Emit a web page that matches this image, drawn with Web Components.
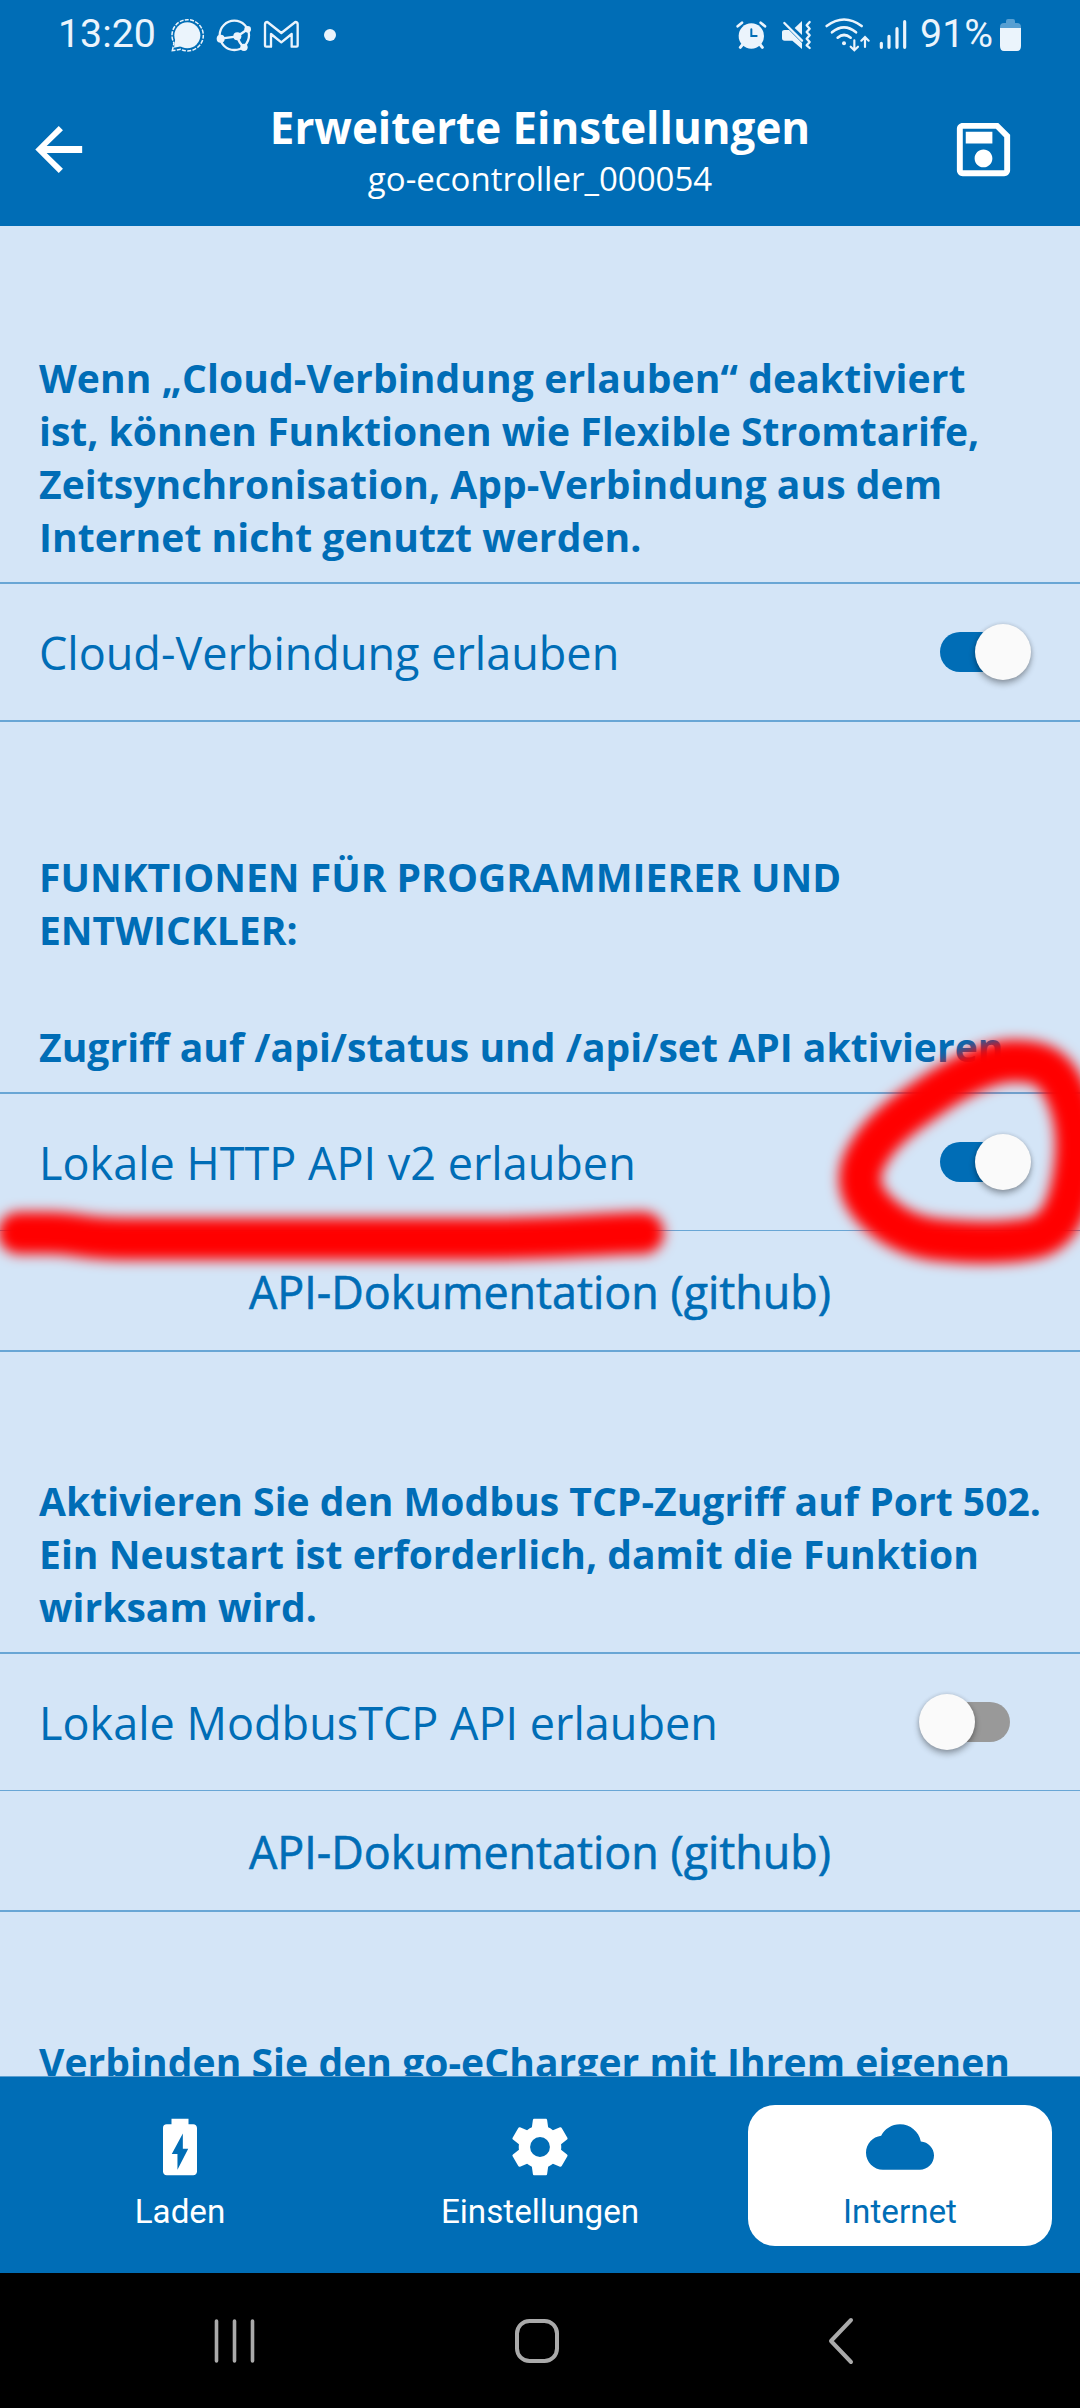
<!DOCTYPE html>
<html lang="de">
<head>
<meta charset="utf-8">
<title>Erweiterte Einstellungen</title>
<style>
html, body { margin: 0; padding: 0; }
body { width: 1080px; height: 2408px; overflow: hidden; font-family: "Open Sans", "Noto Sans", sans-serif; --blue: #006db6; --pale: #d4e5f7; --line: #69a6d5; }
</style>
</head>
<body>
<app-screen>
  <status-bar slot="top"></status-bar>
  <app-bar slot="top"><span slot="title">Erweiterte Einstellungen</span><span slot="subtitle">go-econtroller_000054</span></app-bar>

  <section-note style="--top:125px"><span style="letter-spacing:.1px">Wenn „Cloud-Verbindung erlauben“ deaktiviert</span><br><span style="letter-spacing:0">ist, können Funktionen wie Flexible Stromtarife,</span><br><span style="letter-spacing:.06px">Zeitsynchronisation, App-Verbindung aus dem</span><br><span style="letter-spacing:.05px">Internet nicht genutzt werden.</span></section-note>
  <toggle-row on>Cloud-Verbindung erlauben</toggle-row>

  <section-note style="--top:128px"><span style="letter-spacing:0">FUNKTIONEN FÜR PROGRAMMIERER UND<br>ENTWICKLER:</span><p style="margin:64px 0 0;letter-spacing:.04px">Zugriff auf /api/status und /api/set API aktivieren</p></section-note>
  <toggle-row on thin>Lokale HTTP API v2 erlauben</toggle-row>
  <link-row>API-Dokumentation (github)</link-row>

  <section-note style="--top:122px">Aktivieren Sie den Modbus TCP-Zugriff auf Port 502.<br>Ein Neustart ist erforderlich, damit die Funktion<br>wirksam wird.</section-note>
  <toggle-row thin>Lokale ModbusTCP API erlauben</toggle-row>
  <link-row>API-Dokumentation (github)</link-row>

  <section-note style="--top:123px;letter-spacing:.05px">Verbinden Sie den go-eCharger mit Ihrem eigenen</section-note>

  <tab-bar slot="bottom">
    <tab-item icon="battery">Laden</tab-item>
    <tab-item icon="gear">Einstellungen</tab-item>
    <tab-item icon="cloud" active>Internet</tab-item>
  </tab-bar>
  <system-nav slot="bottom"></system-nav>
</app-screen>
<marker-strokes></marker-strokes>

<script>
const define = (name, html) => customElements.define(name, class extends HTMLElement {
  constructor() {
    super();
    this.attachShadow({ mode: 'open' }).innerHTML = typeof html === 'function' ? html(this) : html;
  }
});

define('app-screen', `
<style>
:host { display: flex; flex-direction: column; width: 1080px; height: 2408px; background: var(--pale); color: var(--blue); }
main { flex: 1; min-height: 0; overflow: hidden; display: flex; flex-direction: column; }
</style>
<slot name="top"></slot><main><slot></slot></main><slot name="bottom"></slot>`);

define('status-bar', `
<style>
:host { display: flex; height: 70px; flex: none; background: var(--blue); color: #ebf4fc; font: 39.3px/46px Roboto, sans-serif; box-sizing: border-box; padding: 11px 59px 0 58px; justify-content: space-between; align-items: flex-start; }
div { display: flex; }
svg { display: block; height: 50px; margin-top: -1px; }
</style>
<div><span>13:20</span>
<svg style="margin-left:4px" width="180" height="50" viewBox="0 0 540 150" fill="none" stroke="#ebf4fc">
  <circle cx="82" cy="76" r="39" fill="#ebf4fc" stroke="none"/>
  <path d="M46 86 L42 113 L68 108 Z" fill="#ebf4fc" stroke="none"/>
  <path d="M37 122 L42 99 A47 47 0 1 1 62 118 Z" stroke-width="4.5" stroke-dasharray="12 4"/>
  <ellipse cx="223" cy="76" rx="44" ry="44" stroke-width="7"/>
  <path d="M182 86 L232 79 L263 58 M232 79 Q236 98 252 112" stroke-width="7"/>
  <g fill="#ebf4fc" stroke="none"><circle cx="182" cy="86" r="12"/><circle cx="232" cy="79" r="12"/><circle cx="263" cy="58" r="10"/><circle cx="252" cy="112" r="11"/></g>
  <path d="M319 110 Q315 110 315 106 V43 Q315 36 322 36 L364 69 L406 36 Q413 36 413 43 V106 Q413 110 409 110 H395 V72 L364 97 L333 72 V110 Z" stroke-width="7" stroke-linejoin="round"/>
  <circle cx="510" cy="75" r="18" fill="#ebf4fc" stroke="none"/>
</svg></div>
<div>
<svg width="188" height="50" viewBox="22 0 564 150" fill="none" stroke="#ebf4fc" stroke-linecap="round">
  <circle cx="80" cy="78" r="38" fill="#ebf4fc" stroke="none"/>
  <path d="M39 49 L52 38 M108 38 L121 49" stroke-width="8"/>
  <path d="M47 112 L55 102 M105 102 L113 112" stroke-width="9"/>
  <path d="M80 58 V78 H96" stroke="#006db6" stroke-width="6"/>
  <path d="M172 67 Q172 60 180 60 H193 L232 99 V117 L203 92 H180 Q172 92 172 84 Z" fill="#ebf4fc" stroke="none"/>
  <path d="M179 39 L232 92" stroke-width="7"/>
  <path d="M232 33 V75 L210 54 Z" fill="#ebf4fc" stroke="none"/>
  <path d="M255 36 L246 46 L255 56 L246 66 L255 76 L246 86 L255 96 L246 106 L255 114" stroke-width="7" stroke-linejoin="round"/>
  <path d="M306 48 Q358 9 411 48 M322 67 Q358 37 394 67 M339 83 Q358 67 378 83" stroke-width="8"/>
  <circle cx="358" cy="100" r="6" fill="#ebf4fc" stroke="none"/>
  <path d="M389 91 V118 M378 110 L389 121 L400 110 M421 111 V82 M410 92 L421 81 L432 92" stroke-width="6.5"/>
  <path d="M470 100 V112 M493 79 V112 M517 56 V112 M540 35 V112" stroke-width="9.5"/>
</svg>
<span>91%</span>
<svg style="margin-left:7px" width="21" height="50" viewBox="0 0 21 50">
  <path d="M6 13 V11 Q6 9 8 9 H13 Q15 9 15 11 V13 H17 Q21 13 21 17 V20 H0 V17 Q0 13 4 13 Z" fill="#579fd2"/>
  <path d="M0 18 H21 V36 Q21 41 17 41 H4 Q0 41 0 36 Z" fill="#ebf4fc"/>
</svg>
</div>`);

define('app-bar', `
<style>
:host { display: grid; grid-template-columns: 1fr auto 1fr; height: 156px; flex: none; background: var(--blue); color: #fff; box-sizing: border-box; padding: 31px 61px 0 23px; }
.t { text-align: center; margin-left: 38px; }
.t b { display: block; font: 700 43.9px/52px "Open Sans", sans-serif; }
.t i { display: block; font: 400 33px/50px "Open Sans", sans-serif; padding-top: 1px; }
svg { display: block; width: 71px; height: 71px; margin-top: 13px; fill: #fff; }
.s { justify-self: end; }
</style>
<svg viewBox="0 0 24 24"><path d="M20 10.85V13.15H8L13.5 18.5L12.08 19.92L4.16 12L12.08 4.08L13.5 5.5L8 10.85H20Z"/></svg>
<div class="t"><b><slot name="title"></slot></b><i><slot name="subtitle"></slot></i></div>
<svg class="s" viewBox="0 0 24 24"><path d="M17 3H5C3.89 3 3 3.9 3 5V19C3 20.1 3.89 21 5 21H19C20.1 21 21 20.1 21 19V7L17 3M19 19H5V5H16.17L19 7.83V19M12 12C10.34 12 9 13.34 9 15S10.34 18 12 18 15 16.66 15 15 13.66 12 12 12M6 6H15V10H6V6Z"/></svg>`);

define('section-note', `
<style>
:host { display: block; flex: none; padding: var(--top) 0 19px 39px; border-bottom: 2px solid var(--line); font: 700 39.05px/53px "Open Sans", sans-serif; letter-spacing: .025px; white-space: nowrap; }
</style><slot></slot>`);

define('toggle-row', `
<style>
:host { display: flex; flex: none; height: 136px; align-items: center; justify-content: space-between; padding: 0 49px 0 39px; border-bottom: 2px solid var(--line); font-size: 45px; white-space: nowrap; }
:host([thin]) { border-bottom-width: 1px; }
.sw { display: flex; align-items: center; width: 112px; height: 56px; }
.track { width: 70px; height: 40px; border-radius: 20px; background: #999; margin-left: 21px; }
.thumb { width: 56px; height: 56px; border-radius: 50%; background: #fafafa; box-shadow: 0 4px 6px rgba(0,0,0,.3), 0 0 4px rgba(0,0,0,.14); margin-left: -91px; }
:host([on]) .track { background: var(--blue); }
:host([on]) .thumb { margin-left: -35px; }
</style>
<span><slot></slot></span><div class="sw"><div class="track"></div><div class="thumb"></div></div>`);

define('link-row', `
<style>
:host { display: flex; flex: none; height: 119px; align-items: center; justify-content: center; border-bottom: 2px solid var(--line); font-size: 44.85px; box-sizing: border-box; height: 121px; padding-top: 1px; -webkit-text-stroke: .6px currentColor; }
</style><slot></slot>`);

define('tab-bar', `
<style>
:host { display: flex; flex: none; height: 197px; box-sizing: border-box; padding: 28px 0; background: var(--blue); border-top: 1px solid #5c9fd0; }
</style><slot></slot>`);

const ICONS = {
  battery: 'M16.67,4H15V2H9V4H7.33A1.33,1.33 0 0,0 6,5.33V20.66C6,21.4 6.6,22 7.33,22H16.66C17.4,22 18,21.4 18,20.67V5.33C18,4.6 17.4,4 16.67,4M11.1,20V14.5H9.1L13,7.2V12.6H14.9L11.1,20Z',
  gear: 'M12,15.5A3.5,3.5 0 0,1 8.5,12A3.5,3.5 0 0,1 12,8.5A3.5,3.5 0 0,1 15.5,12A3.5,3.5 0 0,1 12,15.5M19.43,12.97C19.47,12.65 19.5,12.33 19.5,12C19.5,11.67 19.47,11.34 19.43,11L21.54,9.37C21.73,9.22 21.78,8.95 21.66,8.73L19.66,5.27C19.54,5.05 19.27,4.96 19.05,5.05L16.56,6.05C16.04,5.66 15.5,5.32 14.87,5.07L14.5,2.42C14.46,2.18 14.25,2 14,2H10C9.75,2 9.54,2.18 9.5,2.42L9.13,5.07C8.5,5.32 7.96,5.66 7.44,6.05L4.95,5.05C4.73,4.96 4.46,5.05 4.34,5.27L2.34,8.73C2.21,8.95 2.27,9.22 2.46,9.37L4.57,11C4.53,11.34 4.5,11.67 4.5,12C4.5,12.33 4.53,12.65 4.57,12.97L2.46,14.63C2.27,14.78 2.21,15.05 2.34,15.27L4.34,18.73C4.46,18.95 4.73,19.03 4.95,18.95L7.44,17.94C7.96,18.34 8.5,18.68 9.13,18.93L9.5,21.58C9.54,21.82 9.75,22 10,22H14C14.25,22 14.46,21.82 14.5,21.58L14.87,18.93C15.5,18.67 16.04,18.34 16.56,17.94L19.05,18.95C19.27,19.03 19.54,18.95 19.66,18.73L21.66,15.27C21.78,15.05 21.73,14.78 21.54,14.63L19.43,12.97Z',
  cloud: 'M19.35 10.04C18.67 6.59 15.64 4 12 4 9.11 4 6.6 5.64 5.35 8.04 2.34 8.36 0 10.91 0 14c0 3.31 2.69 6 6 6h13c2.76 0 5-2.24 5-5 0-2.64-2.05-4.78-4.65-4.96z'
};
define('tab-item', el => `
<style>
:host { display: flex; flex: 1; flex-direction: column; align-items: center; gap: 11px; margin: 0 28px; padding-top: 8px; height: 133px; border-radius: 27px; color: #fff; font: 33.2px/40px Roboto, sans-serif; }
:host([active]) { background: #fff; color: var(--blue); }
svg { width: 68px; height: 68px; fill: currentColor; display: block; }
</style>
<svg viewBox="0 0 24 24"><path d="${ICONS[el.getAttribute('icon')]}"/></svg><span><slot></slot></span>`);

define('system-nav', `
<style>
:host { display: flex; flex: none; height: 135px; background: #000; align-items: center; padding-left: 214px; }
svg { display: block; fill: none; stroke: #aaa; stroke-width: 4; stroke-linecap: round; stroke-linejoin: round; }
</style>
<svg width="42" height="46" viewBox="0 0 42 46"><path d="M2.5 3V43M20.5 3V43M38.5 3V43" stroke-width="3.6"/></svg>
<svg style="margin-left:258px" width="46" height="46" viewBox="0 0 46 46"><rect x="3" y="3" width="40" height="40" rx="12.5"/></svg>
<svg style="margin-left:266px" width="28" height="48" viewBox="0 0 28 48"><path d="M25 3L5 24L25 45"/></svg>`);

define('marker-strokes', `
<style>
:host { position: absolute; left: 0; top: 0; width: 1080px; height: 2408px; overflow: hidden; pointer-events: none; }
svg { display: block; }
</style>
<svg width="1080" height="2408" viewBox="0 0 1080 2408" fill="none" stroke="#f00" stroke-linecap="round" stroke-linejoin="round">
  <defs><filter id="soft" filterUnits="userSpaceOnUse" x="-60" y="980" width="1200" height="340"><feGaussianBlur stdDeviation="6.6"/></filter></defs>
  <g filter="url(#soft)" stroke-width="42">
    <path d="M19 1233 H50 C75 1233 85 1239 125 1239 H480 C560 1239 595 1234 643 1233"/>
    <path d="M1011 1061 C988 1062 962 1076 941 1089 C913 1108 884 1126 869 1152 C856 1172 857 1190 872 1207 C890 1227 915 1238 940 1240 C970 1243 1005 1244 1033 1238 C1060 1232 1069 1205 1074 1175 C1078 1150 1079 1120 1065 1091 C1054 1067 1040 1060 1011 1061 Z"/>
  </g>
</svg>`);
</script>
</body>
</html>
